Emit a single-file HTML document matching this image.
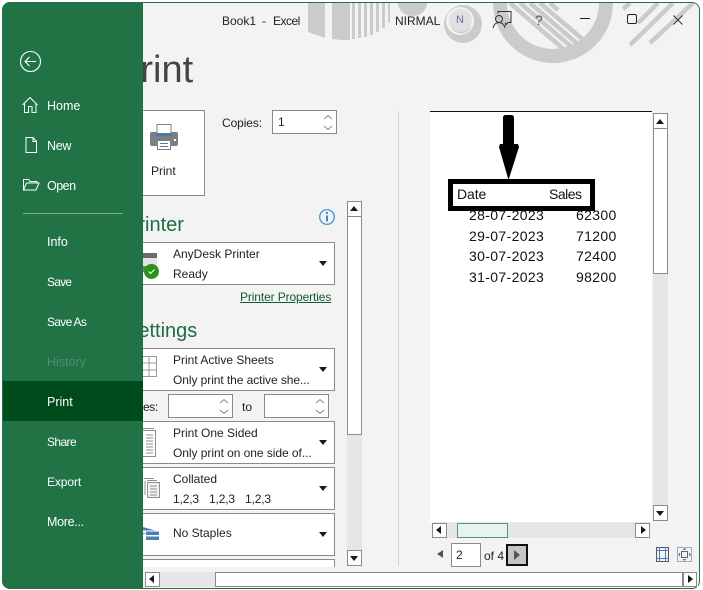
<!DOCTYPE html>
<html><head><meta charset="utf-8"><style>
html,body{margin:0;padding:0;background:#fff}
#w{position:relative;width:703px;height:590px;overflow:hidden;background:#fff;font-family:"Liberation Sans",sans-serif;font-size:12px;color:#222}
#w div,#w span.a{position:absolute;box-sizing:border-box}
.t{white-space:nowrap;line-height:16px}
.box{background:#fff;border:1px solid #8a8a8a}
.arrow{width:0;height:0;border-left:4.5px solid transparent;border-right:4.5px solid transparent;border-top:5px solid #1a1a1a}
.m{color:#fff;font-size:12.5px;left:47px;line-height:16px;white-space:nowrap}
.sb{background:#fff;border:1px solid #8a8a8a}
.grn{color:#1f6e43}
.d{font-size:14px;color:#111;white-space:nowrap;line-height:18px;letter-spacing:.35px}
svg{position:absolute;overflow:visible}
</style></head><body><div id="w">
<div style="left:2px;top:2px;width:698px;height:587px;background:#f3f3f3;border:1px solid #217346;border-radius:8px 8px 8px 8px"></div>

<svg style="left:0;top:0" width="703" height="70" viewBox="0 0 703 70">
<defs><clipPath id="c"><rect x="143" y="3" width="556" height="67"/></clipPath></defs>
<g clip-path="url(#c)" fill="#cbcbcb">
<path d="M308 3h17v35l-17-6zM332 3h18v37l-9 0-9-1zM352 3h3v36h-3zM358 3h3v35h-3zM364 3h3v34h-3zM370 3h3v32h-3zM376 3h3v29h-3zM382 3h3v25h-3zM388 3h2v20h-2z"/>
<path d="M398 3h29a14.500 13 0 0 1-29 0z"/>
<circle cx="463" cy="24" r="19"/>
<circle cx="460" cy="21" r="14" fill="#f3f3f3"/>
<path d="M451 27a11 11 0 0 0 20 0a13 10 0 0 1-20 0z"/>
<circle cx="553" cy="3" r="53" fill="none" stroke="#cbcbcb" stroke-width="14"/>
<path d="M507 3L577 45M523 3l52 45M531 3l50 43M539 3l46 40M547 3l44 37" stroke="none"/>
<g stroke="#cbcbcb" stroke-width="4.500" fill="none">
<path d="M510 3l58 50M520 3l54 46M530 3l50 43M540 3l47 40M550 3l8 7"/>
<path d="M623 9l7-6M638 23l20-20M630 45l43-42M650 43l43-40"/>
</g>
</g>
</svg>

<div class="t" style="left:222px;top:13px;">Book1</div>
<div class="t" style="left:262px;top:13px;">-</div>
<div class="t" style="left:273px;top:13px;letter-spacing:-.5px">Excel</div>
<div class="t" style="left:395px;top:13px;">NIRMAL</div>
<div style="left:449px;top:9px;width:23px;height:23px;border-radius:50%;background:#e0e0e0"></div>
<div class="t" style="left:456px;top:12px;font-size:11px;color:#7a6a9a">N</div>
<svg style="left:492px;top:11px" width="24" height="20" viewBox="0 0 24 20" fill="none" stroke="#333" stroke-width="1">
<path d="M6 2.500V.500h13v11h-3l-2.500 2.500V11.500"/><circle cx="7" cy="8" r="3.500"/><path d="M1 17c1-4 3-5.500 6-5.500s5 1.500 6 5.500"/></svg>
<div class="t" style="left:535px;top:12px;font-size:14px;color:#555">?</div>
<div style="left:580px;top:18px;width:10px;height:1px;background:#222"></div>
<div style="left:627px;top:14px;width:10px;height:10px;border:1px solid #222;border-radius:2px"></div>
<svg style="left:673px;top:15px" width="10" height="10" viewBox="0 0 10 10" stroke="#333" stroke-width="1"><path d="M.5.500l9 9M9.500.500l-9 9"/></svg>

<div class="t" style="left:115px;top:46px;font-size:38px;line-height:48px;color:#444">Print</div>

<div class="box" style="left:100px;top:110px;width:105px;height:86px"></div>
<svg style="left:150px;top:124px" width="28" height="26" viewBox="0 0 28 26">
<rect x="0" y="8" width="28" height="14" rx="2" fill="#7f7f7f"/>
<rect x="7" y="0.500" width="14" height="9" fill="#fff" stroke="#7f7f7f"/>
<rect x="6" y="9" width="16" height="3" fill="#4a78b0"/>
<rect x="7.500" y="16.500" width="13" height="9" fill="#fff" stroke="#7f7f7f"/>
<path d="M10 19.500h8M10 22.500h8" stroke="#4a78b0"/><rect x="24" y="15" width="2" height="2" fill="#fff"/>
</svg>
<div class="t" style="left:151px;top:163px;">Print</div>

<div class="t" style="left:222px;top:115px;letter-spacing:-.1px">Copies:</div>
<div class="box" style="left:272px;top:110px;width:65px;height:24px"></div>
<div class="t" style="left:278px;top:114px;">1</div>
<svg style="left:323px;top:114px" width="10" height="18" viewBox="0 0 10 18" fill="none" stroke="#888"><path d="M1 5l4-3.500 4 3.500M1 12l4 3.500 4-3.500"/></svg>

<div class="t grn" style="left:125px;top:212px;font-size:20px;line-height:26px">Printer</div>
<svg style="left:319px;top:209px" width="16" height="16" viewBox="0 0 16 16"><circle cx="8" cy="8" r="7.300" fill="none" stroke="#2b8fd6" stroke-width="1.200"/><rect x="7" y="3" width="2" height="2" fill="#2b8fd6"/><rect x="7" y="6.500" width="2" height="6" fill="#2b8fd6"/></svg>

<div class="box" style="left:100px;top:242px;width:235px;height:43px"></div>
<div style="left:143px;top:253px;width:14px;height:5px;background:#6b6b6b"></div>
<div style="left:143px;top:258px;width:14px;height:8px;background:#e4e4e4"></div>
<div style="left:143px;top:266px;width:14px;height:6px;background:#7a7a7a"></div>
<svg style="left:144px;top:264px" width="15" height="15" viewBox="0 0 15 15"><circle cx="7.500" cy="7.500" r="7.500" fill="#2c9217"/><path d="M4.500 7.500l2 2 4-4" fill="none" stroke="#fff" stroke-width="1"/></svg>
<div class="t" style="left:173px;top:246px;">AnyDesk Printer</div>
<div class="t" style="left:173px;top:266px;">Ready</div>
<div class="arrow" style="left:319px;top:261px"></div>
<div class="t" style="left:240px;top:289px;color:#0f5c31;text-decoration:underline;letter-spacing:-.12px">Printer Properties</div>

<div class="t grn" style="left:125px;top:318px;font-size:20px;line-height:26px">Settings</div>

<div class="box" style="left:100px;top:348px;width:235px;height:43px"></div>
<svg style="left:143px;top:356px" width="14" height="21" viewBox="0 0 14 21" fill="none" stroke="#9a9a9a"><path d="M0 .500h13.500v20H0M0 7h13.500M0 14h13.500M6 .500v20"/></svg>
<div class="t" style="left:173px;top:352px;">Print Active Sheets</div>
<div class="t" style="left:173px;top:372px;letter-spacing:-.07px">Only print the active she...</div>
<div class="arrow" style="left:319px;top:367px"></div>

<div class="t" style="left:143px;top:399px;letter-spacing:-.4px">es:</div>
<div class="box" style="left:168px;top:394px;width:65px;height:24px"></div>
<svg style="left:219px;top:398px" width="10" height="18" viewBox="0 0 10 18" fill="none" stroke="#888"><path d="M1 5l4-3.500 4 3.500M1 12l4 3.500 4-3.500"/></svg>
<div class="t" style="left:242px;top:399px;">to</div>
<div class="box" style="left:264px;top:394px;width:65px;height:24px"></div>
<svg style="left:315px;top:398px" width="10" height="18" viewBox="0 0 10 18" fill="none" stroke="#888"><path d="M1 5l4-3.500 4 3.500M1 12l4 3.500 4-3.500"/></svg>

<div class="box" style="left:100px;top:421px;width:235px;height:43px"></div>
<svg style="left:143px;top:427px" width="13" height="30" viewBox="0 0 13 30" fill="none" stroke="#8f8f8f"><path d="M0 1.500h11M0 3.500h12.500v26H0M3 8h7M3 11h7M3 14h7M3 17h7M3 20h7M3 23h7M3 26h7"/></svg>
<div class="t" style="left:173px;top:425px;">Print One Sided</div>
<div class="t" style="left:173px;top:445px;letter-spacing:-.05px">Only print on one side of...</div>
<div class="arrow" style="left:319px;top:440px"></div>

<div class="box" style="left:100px;top:467px;width:235px;height:43px"></div>
<svg style="left:144px;top:478px" width="16" height="20" viewBox="0 0 16 20" fill="none" stroke="#8f8f8f"><path d="M0 .500h10M1 3v14M3 2.500h10"/><rect x="3.500" y="4.500" width="12" height="15" fill="#f3f3f3"/><path d="M6 8h7M6 11h7M6 14h7M6 17h7"/></svg>
<div class="t" style="left:173px;top:471px;">Collated</div>
<div class="t" style="left:173px;top:491px;letter-spacing:-.15px">1,2,3</div>
<div class="t" style="left:209px;top:491px;letter-spacing:-.15px">1,2,3</div>
<div class="t" style="left:245px;top:491px;letter-spacing:-.15px">1,2,3</div>
<div class="arrow" style="left:319px;top:486px"></div>

<div class="box" style="left:100px;top:513px;width:235px;height:43px"></div>
<svg style="left:143px;top:527px" width="16" height="14" viewBox="0 0 16 14"><path d="M0 0l12 3.500H0z" fill="#4a7fb8"/><rect x="3" y="4.500" width="13" height="3.500" fill="#4a7fb8"/><rect x="3" y="9.500" width="13" height="3.500" fill="#4a7fb8"/><rect x="0" y="6" width="2" height="1" fill="#4a7fb8"/></svg>
<div class="t" style="left:173px;top:525px;">No Staples</div>
<div class="arrow" style="left:319px;top:532px"></div>

<div class="box" style="left:100px;top:559px;width:235px;height:20px"></div>
<div style="left:100px;top:567px;width:250px;height:5px;background:#f3f3f3"></div>

<div style="left:347px;top:201px;width:15px;height:365px;background:#e6e6e6"></div>
<div class="sb" style="left:347px;top:201px;width:15px;height:234px"></div>
<div class="sb" style="left:347px;top:201px;width:15px;height:16px"></div>
<div class="arrow" style="left:350px;top:206px;border-top:0;border-bottom:5px solid #1a1a1a"></div>
<div class="sb" style="left:347px;top:550px;width:15px;height:16px"></div>
<div class="arrow" style="left:350px;top:556px"></div>

<div style="left:398px;top:111px;width:1px;height:455px;background:#d4d4d4"></div>

<div style="left:430px;top:111px;width:222px;height:411px;background:#fff;border-top:1px solid #111"></div>
<svg style="left:498px;top:114px" width="22" height="66" viewBox="0 0 22 66"><path d="M5 3a3 3 0 0 1 3-2h5a3 3 0 0 1 3 2v27h4l1 3-10.500 33L1 33l1-3h3z" fill="#000"/></svg>
<div style="left:448px;top:179px;width:147px;height:32px;background:#fff;border:5px solid #000"></div>
<div class="d" style="left:457px;top:185px;letter-spacing:-.1px">Date</div>
<div class="d" style="left:549px;top:185px;letter-spacing:-.5px">Sales</div>
<div class="d" style="left:469px;top:206px">28-07-2023</div><div class="d" style="left:576px;top:206px">62300</div>
<div class="d" style="left:469px;top:227px">29-07-2023</div><div class="d" style="left:576px;top:227px">71200</div>
<div class="d" style="left:469px;top:247px">30-07-2023</div><div class="d" style="left:576px;top:247px">72400</div>
<div class="d" style="left:469px;top:268px">31-07-2023</div><div class="d" style="left:576px;top:268px">98200</div>

<div style="left:653px;top:113px;width:15px;height:408px;background:#e6e6e6"></div>
<div class="sb" style="left:653px;top:113px;width:15px;height:161px"></div>
<div class="sb" style="left:653px;top:113px;width:15px;height:16px"></div>
<div class="arrow" style="left:656px;top:119px;border-top:0;border-bottom:5px solid #1a1a1a"></div>
<div class="sb" style="left:653px;top:505px;width:15px;height:16px"></div>
<div class="arrow" style="left:656px;top:511px"></div>

<div style="left:432px;top:522px;width:218px;height:16px;background:#e6e6e6"></div>
<div class="sb" style="left:432px;top:523px;width:15px;height:15px"></div>
<div class="arrow" style="left:436px;top:526px;border:4.5px solid transparent;border-left:0;border-right:5px solid #1a1a1a"></div>
<div style="left:457px;top:523px;width:51px;height:15px;background:#e9f3ed;border:1px solid #4f9a71"></div>
<div class="sb" style="left:635px;top:523px;width:15px;height:15px"></div>
<div class="arrow" style="left:641px;top:526px;border:4.5px solid transparent;border-right:0;border-left:5px solid #1a1a1a"></div>

<div class="arrow" style="left:437px;top:550px;border:4.5px solid transparent;border-left:0;border-right:6px solid #555"></div>
<div class="box" style="left:451px;top:543px;width:30px;height:24px"></div>
<div class="t" style="left:456px;top:547px;">2</div>
<div class="t" style="left:484px;top:548px;">of 4</div>
<div style="left:506px;top:544px;width:22px;height:22px;background:#c6c6c6;border:2px solid #111"></div>
<div class="arrow" style="left:514px;top:550px;border:5px solid transparent;border-right:0;border-left:6px solid #555"></div>

<svg style="left:656px;top:547px" width="14" height="16" viewBox="0 0 14 16" fill="none"><rect x=".5" y=".5" width="12" height="14" stroke="#555"/><path d="M3.500 0v15M9.500 0v15M0 3.500h13M0 11.500h13" stroke="#4a7fb8"/></svg>
<svg style="left:677px;top:547px" width="16" height="16" viewBox="0 0 16 16" fill="none"><rect x=".5" y=".5" width="14" height="14" stroke="#aaa"/><rect x="4.500" y="4.500" width="6" height="6" stroke="#666"/><path d="M7.500 1l-2 2h4zM7.500 14l-2-2h4zM1 7.500l2-2v4zM14 7.500l-2-2v4z" fill="#4a7fb8"/></svg>

<div style="left:143px;top:567px;width:555px;height:20px;background:#f3f3f3"></div>
<div style="left:145px;top:572px;width:552px;height:15px;background:#e6e6e6"></div>
<div class="sb" style="left:145px;top:572px;width:15px;height:15px"></div>
<div class="arrow" style="left:149px;top:575px;border:4.5px solid transparent;border-left:0;border-right:5px solid #1a1a1a"></div>
<div class="sb" style="left:215px;top:572px;width:468px;height:15px"></div>
<div class="sb" style="left:683px;top:572px;width:14px;height:15px"></div>
<div class="arrow" style="left:688px;top:575px;border:4.5px solid transparent;border-right:0;border-left:5px solid #1a1a1a"></div>

<div style="left:2px;top:2px;width:141px;height:587px;background:#217346;border-radius:8px 0 0 8px"></div>
<div style="left:3px;top:381px;width:140px;height:40px;background:#004b1c"></div>
<svg style="left:19px;top:50px" width="23" height="23" viewBox="0 0 23 23" fill="none" stroke="#fff" stroke-width="1.100"><circle cx="11.500" cy="11.500" r="10"/><path d="M17 11.500H6.500M10.500 7l-4.500 4.500 4.500 4.500"/></svg>
<svg style="left:22px;top:96px" width="18" height="18" viewBox="0 0 18 18" fill="none" stroke="#fff"><path d="M.5 9L8 1.500 15.500 9M2.500 7.500v9h4v-6h3.500v6h4v-9"/></svg>
<svg style="left:24px;top:136px" width="14" height="18" viewBox="0 0 14 18" fill="none" stroke="#fff"><path d="M2 1.500h7l3.500 4v11h-10.500zM9 1.500v4h3.500"/></svg>
<svg style="left:22px;top:179px" width="18" height="12" viewBox="0 0 18 12" fill="none" stroke="#fff"><path d="M1.500 11V.5h5l1.500 2h7v1.500M1.500 11l3-7h12.500l-3 7z"/></svg>
<div class="m" style="top:98px">Home</div>
<div class="m" style="top:138px;letter-spacing:-.3px">New</div>
<div class="m" style="top:178px;letter-spacing:-.5px">Open</div>
<div style="left:23px;top:213px;width:100px;height:1px;background:#7fb096"></div>
<div class="m" style="top:234px">Info</div>
<div class="m" style="top:274px;font-size:12px;letter-spacing:-.8px">Save</div>
<div class="m" style="top:314px;font-size:12px;letter-spacing:-.7px">Save As</div>
<div class="m" style="top:354px;color:#4f8f6c">History</div>
<div class="m" style="top:394px">Print</div>
<div class="m" style="top:434px;font-size:12px;letter-spacing:-.6px">Share</div>
<div class="m" style="top:474px;font-size:12px;letter-spacing:-.1px">Export</div>
<div class="m" style="top:514px;letter-spacing:-.3px">More...</div>
</div></body></html>
